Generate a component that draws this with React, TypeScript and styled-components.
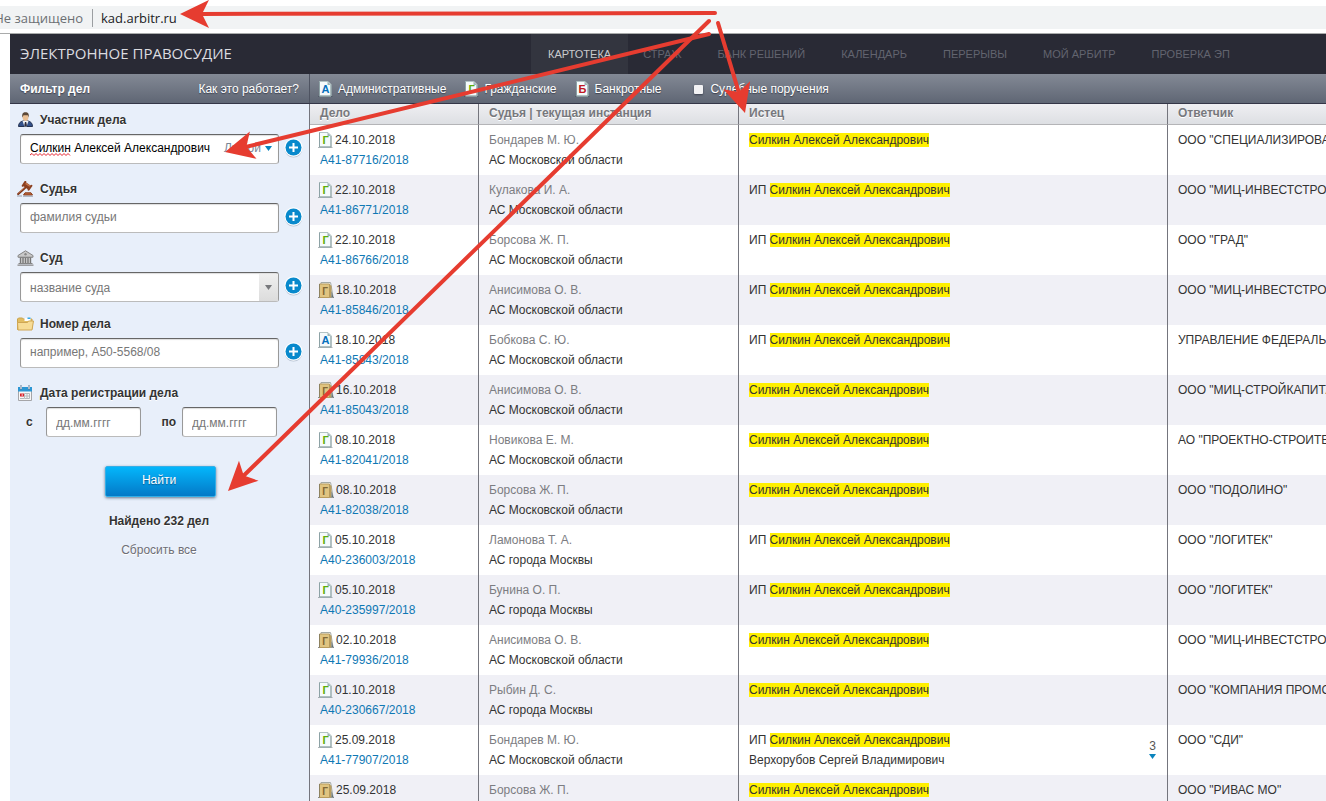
import React from 'react';
import styled, { createGlobalStyle, css } from 'styled-components';

const GlobalStyle = createGlobalStyle`
  *, *::before, *::after { box-sizing: border-box; }
  body {
    margin: 0;
    background: #fff;
    color: #333;
    font: 12px/20px "Liberation Sans", Arial, sans-serif;
  }
  button, input, select { font: inherit; }
`;

const Page = styled.div`
  position: relative;
  display: flex;
  flex-direction: column;
  height: 100vh;
  overflow: hidden;
`;

/* ---------- browser address bar ---------- */

const AddressBar = styled.div`
  display: flex;
  align-items: center;
  flex: none;
  height: 34px;
  padding: 6px 0 4px;
  border-bottom: 1px solid #a9abab;
  background: #f1f3f4 content-box;
  font: 13px/18px "Open Sans", "Noto Sans", sans-serif;
`;

const Security = styled.span`
  display: flex;
  justify-content: flex-end;
  width: 83px;
  overflow: hidden;
  white-space: nowrap;
  color: #6b6f73;
`;

const Url = styled.span`
  margin-left: 9px;
  padding-left: 8px;
  border-left: 1px solid #9b9ea1;
  color: #202124;
`;

/* ---------- header ---------- */

const Site = styled.div`
  display: flex;
  flex-direction: column;
  flex: 1;
  min-height: 0;
  margin-left: 10px;
`;

const Header = styled.header`
  display: flex;
  flex: none;
  height: 40px;
  background: #292a35;
`;

const Brand = styled.h1`
  flex: 0 0 521px;
  margin: 0;
  padding-left: 10px;
  color: #dcdce0;
  font: 400 15px/39px "Open Sans", "Noto Sans", sans-serif;
`;

const Nav = styled.nav`
  display: flex;
`;

const NavLink = styled.a<{ $active?: boolean }>`
  padding: ${p => (p.$active ? '0 17px' : '0 21px 0 15px')};
  color: ${p => (p.$active ? '#c9cacd' : '#62646f')};
  background: ${p => (p.$active ? '#33353f' : 'transparent')};
  font-size: 11px;
  line-height: 41px;
  text-decoration: none;
  white-space: nowrap;
`;

/* ---------- toolbar ---------- */

const Toolbar = styled.div`
  display: flex;
  flex: none;
  height: 30px;
  border-bottom: 1px solid #343647;
  background: linear-gradient(#838995, #5f6674);
  color: #fff;
  line-height: 30px;
  text-shadow: 0 1px 1px #3d4250;
`;

const ToolbarSide = styled.div`
  display: flex;
  justify-content: space-between;
  flex: 0 0 300px;
  padding: 0 10px;
  border-right: 1px solid #4e5361;
`;

const SideTitle = styled.h2`
  margin: 0;
  font-size: 12px;
`;

const HelpLink = styled.a`
  color: #fff;
  text-decoration: none;
`;

const ToolbarTypes = styled.div`
  display: flex;
  align-items: center;
  gap: 18px;
  padding: 1px 0 0 8px;
`;

const TypeButton = styled.button`
  display: flex;
  align-items: center;
  gap: 5px;
  padding: 0;
  border: 0;
  background: none;
  color: inherit;
  text-shadow: inherit;
  cursor: pointer;
`;

const OrdersLabel = styled.label`
  display: flex;
  align-items: center;
  gap: 7px;
  margin-left: 15px;
`;

const SmallCheckbox = styled.input`
  appearance: none;
  width: 9px;
  height: 9px;
  margin: 0;
  border-radius: 1px;
  background: #f2f2f4;
  box-shadow: 0 1px 2px #3d4250;
`;

/* ---------- filter sidebar ---------- */

const Main = styled.main`
  display: flex;
  flex: 1;
  min-height: 0;
`;

const Sidebar = styled.form`
  flex: 0 0 300px;
  border-right: 1px solid #74757d;
  background: #e8effa;
  text-shadow: 0 1px 0 #fff;
`;

const Field = styled.div<{ $tight?: boolean }>`
  margin-bottom: ${p => (p.$tight ? 6 : 9)}px;
`;

const FieldHead = styled.div`
  display: flex;
  align-items: center;
  gap: 6px;
  height: 30px;
  padding: 2px 0 0 7px;
`;

const FieldLabel = styled.label`
  color: #333;
  font-weight: 700;
`;

const FieldRow = styled.div`
  display: flex;
  align-items: flex-start;
  gap: 5px;
  padding-left: 10px;
`;

const ControlWrap = styled.div`
  position: relative;
  flex: 0 0 259px;
`;

const control = css`
  display: block;
  width: 100%;
  height: 30px;
  border: 1px solid #999;
  border-top-color: #666;
  border-bottom-color: #bbb;
  border-radius: 3px;
  background: #fff;
  box-shadow: inset 0 1px 1px #ddd;
  color: #000;
`;

const TextInput = styled.input`
  ${control}
  padding: 0 9px 2px;
  &::placeholder { color: #777; opacity: 1; }
`;

const CourtSelect = styled.select`
  ${control}
  appearance: none;
  padding: 2px 26px 0 9px;
  color: #777;
`;

const SelectArrow = styled.span`
  position: absolute;
  top: 2px;
  right: 1px;
  bottom: 1px;
  display: flex;
  align-items: center;
  justify-content: center;
  width: 19px;
  background: linear-gradient(#efefef, #dcdcdc);
  pointer-events: none;
`;

const RoleButton = styled.button`
  position: absolute;
  top: 4px;
  right: 7px;
  display: flex;
  align-items: center;
  gap: 4px;
  padding: 0;
  border: 0;
  background: none;
  color: #7b8797;
`;

const SpellMark = styled.svg`
  position: absolute;
  left: 10px;
  top: 19px;
`;

const AddButton = styled.button`
  width: 19px;
  height: 20px;
  margin-top: 4px;
  padding: 0;
  border: 0;
  background: none;
  svg { display: block; }
`;

const DateRow = styled.div`
  display: flex;
  align-items: center;
  justify-content: space-between;
  padding: 0 32px 0 16px;
`;

const DateLabel = styled.label`
  display: flex;
  align-items: center;
  gap: 6px;
  font-weight: 700;
`;

const DateInput = styled.input`
  ${control}
  width: 95px;
  padding: 2px 9px 0;
  font-weight: 400;
  &::placeholder { color: #777; opacity: 1; }
`;

const FromText = styled.span`
  width: 14px;
`;

const Summary = styled.div`
  display: flex;
  flex-direction: column;
  align-items: center;
  padding: 20px 1px 0 0;
`;

const FindButton = styled.button`
  width: 111px;
  height: 31px;
  margin-left: 2px;
  padding: 0 2px 3px 0;
  border: 1px solid #35aee6;
  border-radius: 2px;
  background: linear-gradient(#04b6fb, #0479c7);
  box-shadow: 0 1px 3px #66788f;
  color: #fff;
  text-shadow: 0 1px 1px #0a5d94;
`;

const FoundCount = styled.p`
  margin: 14px 0 9px;
  font-weight: 700;
`;

const ResetButton = styled.button`
  padding: 0;
  border: 0;
  background: none;
  color: #6d6e76;
  line-height: 20px;
  text-shadow: inherit;
`;

/* ---------- results ---------- */

const Results = styled.section`
  flex: 1;
  min-width: 0;
  overflow: hidden;
`;

const Table = styled.table`
  width: 100%;
  border-spacing: 0;
  table-layout: fixed;
`;

const Th = styled.th<{ $width?: number }>`
  width: ${p => (p.$width ? `${p.$width}px` : 'auto')};
  height: 21px;
  padding: 0 10px 2px;
  border-bottom: 1px solid #b4b4b7;
  border-right: 1px solid #74757d;
  background: linear-gradient(#efeff2, #dddfe3);
  color: #77787d;
  line-height: 18px;
  text-align: left;
  text-shadow: 0 1px 0 #fff;
  white-space: nowrap;
  &:last-child { border-right: 0; }
`;

const Tr = styled.tr`
  height: 50px;
  &:nth-child(even) { background: #f0f0f6; }
`;

const Td = styled.td`
  position: relative;
  padding: 5px 10px;
  border-right: 1px solid #74757d;
  vertical-align: top;
  overflow: hidden;
  white-space: nowrap;
  &:last-child { border-right: 0; }
`;

const CaseTd = styled(Td)`
  padding-left: 8px;
`;

const CaseDate = styled.div`
  display: flex;
  align-items: center;
  gap: 2px;
`;

const CaseLink = styled.a`
  margin-left: 2px;
  color: #0f78b4;
  text-decoration: none;
`;

const Judge = styled.div`
  color: #7c7d82;
`;

const Match = styled.mark`
  background: #fff000;
  color: #333;
`;

const MoreButton = styled.button`
  position: absolute;
  top: 11px;
  right: 11px;
  display: flex;
  flex-direction: column;
  align-items: center;
  padding: 0;
  border: 0;
  background: none;
  color: #555;
  svg { margin-top: -2px; }
`;

const Arrows = styled.svg`
  position: absolute;
  top: 0;
  left: 0;
  pointer-events: none;
`;

/* ---------- icons ---------- */

type Kind = 'А' | 'Г' | 'Б';
const letterColor: Record<Kind, string> = { А: '#0670bd', Г: '#5fae08', Б: '#c01722' };

const DocIcon = ({ kind }: { kind: Kind }) => (
  <svg width="15" height="17" viewBox="0 0 15 17" aria-hidden="true">
    <path d="M0 15.500h14.500" stroke="#35404a" strokeOpacity=".4" />
    <path d="M1.500.5h8.500l3 3v11.500h-11.500z" fill="#f5fafb" stroke="#b3c3c4" />
    <path d="M1.500.5v14.500h11.500v-11" fill="none" stroke="#8da2a5" />
    <path d="M9.500.5v3.500h3.500z" fill="#9fb5b5" />
    <text x="7.500" y="12" textAnchor="middle" fontSize="11" fontWeight="700" fill={letterColor[kind]} style={{ textShadow: 'none' }}>{kind}</text>
  </svg>
);

const FolderDocIcon = () => (
  <svg width="16" height="17" viewBox="0 0 16 17" aria-hidden="true">
    <path d="M0 15.500h16" stroke="#35404a" strokeOpacity=".6" />
    <path d="M3 .5h9.500l.5 2 2 12.500h-13z" fill="#eef1f1" stroke="#a2a9a6" />
    <path d="M1.500 2h10v13.500h-10z" fill="#e0c480" stroke="#b89b5c" />
    <path d="M1.500 2v13.500" stroke="#8d815f" />
    <path d="M12 2.500l1.500 1.500v11.500h-1.500z" fill="#b99e60" />
    <path d="M13.500 9l1.800 6h-1.800z" fill="#60717a" />
    <text x="7" y="13" textAnchor="middle" fontSize="10" fontWeight="700" fill="#806733">Г</text>
  </svg>
);

const PersonIcon = () => (
  <svg width="17" height="16" viewBox="0 0 17 16" aria-hidden="true">
    <path d="M1.500 14.500c0-3.500 2-5 4.500-5.500h5c2.500.5 4.500 2 4.500 5.500z" fill="#34518a" stroke="#263452" />
    <path d="M5.500 9h6L9.500 14.500h-2z" fill="#eef3f8" />
    <path d="M8 10h1.200l.8 3.500-1.400 1-1.400-1z" fill="#2d2c3d" />
    <ellipse cx="8.500" cy="5.200" rx="2.900" ry="3.700" fill="#eabf94" />
    <path d="M5.400 5.500C4.800 2.200 5.500.3 8.300.2c3 0 4 1.600 3.300 5.300L10.800 3.300H6.500z" fill="#5c4837" />
  </svg>
);

const GavelIcon = () => (
  <svg width="17" height="16" viewBox="0 0 17 16" aria-hidden="true">
    <path d="M8.500 6.500L1.200 13" stroke="#7b3418" strokeWidth="2.200" strokeLinecap="round" />
    <path d="M8.300 6L1.400 12.300" stroke="#c9774a" strokeWidth=".8" />
    <path d="M7.200 2.800l5.300 3.800" stroke="#8c4020" strokeWidth="4.600" />
    <path d="M7.900 1.800l5.300 3.600" stroke="#c4744a" strokeWidth="1.600" />
    <path d="M5.700 4.800L8.300.9M11.600 8.800l2.800-4" stroke="#8c4020" strokeWidth="2" strokeLinecap="round" />
    <path d="M8 11.800h6l1.500 2.200h-9z" fill="#bd6539" stroke="#8c4020" />
    <path d="M0 15h5M6 15.200h10" stroke="#99a1ae" />
  </svg>
);

const CourtIcon = () => (
  <svg width="17" height="16" viewBox="0 0 17 16" aria-hidden="true">
    <path d="M1 5.500L8.500.8 16 5.500v1.700H1z" fill="#c9c9c9" stroke="#858585" />
    <circle cx="8.500" cy="4.300" r="1.200" fill="#888" />
    <path d="M3 7.500h11v6H3z" fill="#d5d5d5" />
    <path d="M3.500 8v5M6 8v5M8.500 8v5M11 8v5M13.500 8v5" stroke="#777" strokeWidth="1.400" />
    <path d="M2.500 7.500h12M1.500 13.500h14M.5 15.200h16" stroke="#858585" strokeWidth="1.200" />
  </svg>
);

const FolderIcon = () => (
  <svg width="17" height="16" viewBox="0 0 17 16" aria-hidden="true">
    <path d="M.5 13.500V3l1-1h4l1 1h8.500v10z" fill="#e2bd62" stroke="#c9a34c" />
    <path d="M7.500 2h6v3h-6z" fill="#fff" />
    <path d="M10.500 1.500h3v1.500h-3z" fill="#35a9e8" />
    <path d="M.5 6.500h10l1-1.500h5l-1.500 9h-14z" fill="#f7dc96" stroke="#cfa654" />
  </svg>
);

const CalendarIcon = () => (
  <svg width="17" height="16" viewBox="0 0 17 16" aria-hidden="true">
    <path d="M1.500 3.500h13v12h-13z" fill="#f7f7f7" stroke="#a5a5a8" />
    <path d="M1 2h14v4.500H1z" fill="#2c96d3" />
    <path d="M4 .5v4M12 .5v4" stroke="#5e7992" strokeWidth="2" />
    <path d="M4 1v3M12 1v3" stroke="#fff" />
    <path d="M3 8.500h4v3H3z" fill="#d6212a" />
    <path d="M4.500 10h1.500" stroke="#fff" />
    <path d="M7.500 8.500h5v5h-5zM7.500 11h5M10 8.500v5M3 13.500h4" fill="none" stroke="#b5b9bd" />
  </svg>
);

const PlusIcon = () => (
  <svg width="19" height="20" viewBox="0 0 19 20" aria-hidden="true">
    <circle cx="9.500" cy="10.600" r="8.900" fill="#b7c3d3" />
    <circle cx="9.500" cy="9.500" r="9.200" fill="#fff" />
    <circle cx="9.500" cy="9.500" r="8" fill="#0889cc" />
    <path d="M9.500 5v9M5 9.500h9" stroke="#fff" strokeWidth="2" />
  </svg>
);

const Caret = ({ color = '#0a84bd' }: { color?: string }) => (
  <svg width="7" height="5" viewBox="0 0 7 5" aria-hidden="true">
    <path d="M0 0h7L3.500 5z" fill={color} />
  </svg>
);

/* ---------- annotation arrows ---------- */

const arrowLines = [
  { from: [715, 13], to: [180, 14] },
  { from: [709, 34], to: [225, 152] },
  { from: [709, 21], to: [228, 491] },
  { from: [718, 23], to: [745, 113] },
];

const AnnotationArrow = ({ from, to }: { from: number[]; to: number[] }) => {
  const dx = to[0] - from[0];
  const dy = to[1] - from[1];
  const length = Math.hypot(dx, dy);
  const angle = (Math.atan2(dy, dx) * 180) / Math.PI;
  return (
    <g transform={`translate(${from[0]} ${from[1]}) rotate(${angle})`}>
      <path d={`M0 0H${length - 20}`} stroke="#e63c30" strokeWidth="4" strokeLinecap="round" />
      <path d={`M${length} 0l-29-14 7 14-7 14z`} fill="#e63c30" />
    </g>
  );
};

/* ---------- data ---------- */

const nav = ['КАРТОТЕКА', 'СТРАЖ', 'БАНК РЕШЕНИЙ', 'КАЛЕНДАРЬ', 'ПЕРЕРЫВЫ', 'МОЙ АРБИТР', 'ПРОВЕРКА ЭП'];

const types: { kind: Kind; label: string }[] = [
  { kind: 'А', label: 'Административные' },
  { kind: 'Г', label: 'Гражданские' },
  { kind: 'Б', label: 'Банкротные' },
];

const PLAINTIFF = 'Силкин Алексей Александрович';
const MO = 'АС Московской области';
const MSK = 'АС города Москвы';

interface CaseRow {
  date: string;
  num: string;
  icon: 'А' | 'Г' | 'folder';
  judge: string;
  court: string;
  ip?: boolean;
  respondent: string;
  extra?: string;
  count?: number;
}

const cases: CaseRow[] = [
  { date: '24.10.2018', num: 'А41-87716/2018', icon: 'Г', judge: 'Бондарев М. Ю.', court: MO, respondent: 'ООО "СПЕЦИАЛИЗИРОВАННЫЙ' },
  { date: '22.10.2018', num: 'А41-86771/2018', icon: 'Г', judge: 'Кулакова И. А.', court: MO, ip: true, respondent: 'ООО "МИЦ-ИНВЕСТСТРОЙ"' },
  { date: '22.10.2018', num: 'А41-86766/2018', icon: 'Г', judge: 'Борсова Ж. П.', court: MO, ip: true, respondent: 'ООО "ГРАД"' },
  { date: '18.10.2018', num: 'А41-85846/2018', icon: 'folder', judge: 'Анисимова О. В.', court: MO, ip: true, respondent: 'ООО "МИЦ-ИНВЕСТСТРОЙ"' },
  { date: '18.10.2018', num: 'А41-85843/2018', icon: 'А', judge: 'Бобкова С. Ю.', court: MO, ip: true, respondent: 'УПРАВЛЕНИЕ ФЕДЕРАЛЬНОЙ' },
  { date: '16.10.2018', num: 'А41-85043/2018', icon: 'folder', judge: 'Анисимова О. В.', court: MO, respondent: 'ООО "МИЦ-СТРОЙКАПИТАЛ"' },
  { date: '08.10.2018', num: 'А41-82041/2018', icon: 'Г', judge: 'Новикова Е. М.', court: MO, respondent: 'АО "ПРОЕКТНО-СТРОИТЕЛЬНОЕ' },
  { date: '08.10.2018', num: 'А41-82038/2018', icon: 'folder', judge: 'Борсова Ж. П.', court: MO, respondent: 'ООО "ПОДОЛИНО"' },
  { date: '05.10.2018', num: 'А40-236003/2018', icon: 'Г', judge: 'Ламонова Т. А.', court: MSK, ip: true, respondent: 'ООО "ЛОГИТЕК"' },
  { date: '05.10.2018', num: 'А40-235997/2018', icon: 'Г', judge: 'Бунина О. П.', court: MSK, ip: true, respondent: 'ООО "ЛОГИТЕК"' },
  { date: '02.10.2018', num: 'А41-79936/2018', icon: 'folder', judge: 'Анисимова О. В.', court: MO, respondent: 'ООО "МИЦ-ИНВЕСТСТРОЙ"' },
  { date: '01.10.2018', num: 'А40-230667/2018', icon: 'Г', judge: 'Рыбин Д. С.', court: MSK, respondent: 'ООО "КОМПАНИЯ ПРОМСТРОЙ"' },
  { date: '25.09.2018', num: 'А41-77907/2018', icon: 'Г', judge: 'Бондарев М. Ю.', court: MO, ip: true, respondent: 'ООО "СДИ"', extra: 'Верхорубов Сергей Владимирович', count: 3 },
  { date: '25.09.2018', num: '', icon: 'folder', judge: 'Борсова Ж. П.', court: '', respondent: 'ООО "РИВАС МО"' },
];

export default function App() {
  return (
    <Page>
      <GlobalStyle />
      <AddressBar>
        <Security>Не защищено</Security>
        <Url>kad.arbitr.ru</Url>
      </AddressBar>

      <Site>
        <Header>
          <Brand>ЭЛЕКТРОННОЕ ПРАВОСУДИЕ</Brand>
          <Nav>
            {nav.map((label, i) => (
              <NavLink key={label} href="#" $active={i === 0}>{label}</NavLink>
            ))}
          </Nav>
        </Header>

        <Toolbar>
          <ToolbarSide>
            <SideTitle>Фильтр дел</SideTitle>
            <HelpLink href="#">Как это работает?</HelpLink>
          </ToolbarSide>
          <ToolbarTypes>
            {types.map(t => (
              <TypeButton key={t.kind} type="button">
                <DocIcon kind={t.kind} />
                {t.label}
              </TypeButton>
            ))}
            <OrdersLabel>
              <SmallCheckbox type="checkbox" />
              Судебные поручения
            </OrdersLabel>
          </ToolbarTypes>
        </Toolbar>

        <Main>
          <Sidebar onSubmit={e => e.preventDefault()}>
            <Field>
              <FieldHead>
                <PersonIcon />
                <FieldLabel htmlFor="party">Участник дела</FieldLabel>
              </FieldHead>
              <FieldRow>
                <ControlWrap>
                  <TextInput id="party" defaultValue={PLAINTIFF} spellCheck={false} />
                  <SpellMark width="41" height="3" viewBox="0 0 41 3" aria-hidden="true">
                    <path d="M0 2l2-1.500 2 2 2-2 2 2 2-2 2 2 2-2 2 2 2-2 2 2 2-2 2 2 2-2 2 2 2-2 2 2 2-2 2 2 2-2 2 2" fill="none" stroke="#e3202c" />
                  </SpellMark>
                  <RoleButton type="button">Любой<Caret /></RoleButton>
                </ControlWrap>
                <AddButton type="button" aria-label="Добавить участника"><PlusIcon /></AddButton>
              </FieldRow>
            </Field>

            <Field>
              <FieldHead>
                <GavelIcon />
                <FieldLabel htmlFor="judge">Судья</FieldLabel>
              </FieldHead>
              <FieldRow>
                <ControlWrap><TextInput id="judge" placeholder="фамилия судьи" /></ControlWrap>
                <AddButton type="button" aria-label="Добавить судью"><PlusIcon /></AddButton>
              </FieldRow>
            </Field>

            <Field $tight>
              <FieldHead>
                <CourtIcon />
                <FieldLabel htmlFor="court">Суд</FieldLabel>
              </FieldHead>
              <FieldRow>
                <ControlWrap>
                  <CourtSelect id="court"><option>название суда</option></CourtSelect>
                  <SelectArrow><Caret color="#77787c" /></SelectArrow>
                </ControlWrap>
                <AddButton type="button" aria-label="Добавить суд"><PlusIcon /></AddButton>
              </FieldRow>
            </Field>

            <Field>
              <FieldHead>
                <FolderIcon />
                <FieldLabel htmlFor="number">Номер дела</FieldLabel>
              </FieldHead>
              <FieldRow>
                <ControlWrap><TextInput id="number" placeholder="например, А50-5568/08" /></ControlWrap>
                <AddButton type="button" aria-label="Добавить номер"><PlusIcon /></AddButton>
              </FieldRow>
            </Field>

            <Field>
              <FieldHead>
                <CalendarIcon />
                <FieldLabel htmlFor="from">Дата регистрации дела</FieldLabel>
              </FieldHead>
              <DateRow>
                <DateLabel><FromText>с</FromText><DateInput id="from" placeholder="дд.мм.гггг" /></DateLabel>
                <DateLabel>по<DateInput placeholder="дд.мм.гггг" /></DateLabel>
              </DateRow>
            </Field>

            <Summary>
              <FindButton type="submit">Найти</FindButton>
              <FoundCount>Найдено 232 дел</FoundCount>
              <ResetButton type="reset">Сбросить все</ResetButton>
            </Summary>
          </Sidebar>

          <Results>
            <Table>
              <thead>
                <tr>
                  <Th $width={169}>Дело</Th>
                  <Th $width={260}>Судья | текущая инстанция</Th>
                  <Th $width={429}>Истец</Th>
                  <Th>Ответчик</Th>
                </tr>
              </thead>
              <tbody>
                {cases.map((c, i) => (
                  <Tr key={i}>
                    <CaseTd>
                      <CaseDate>
                        {c.icon === 'folder' ? <FolderDocIcon /> : <DocIcon kind={c.icon} />}
                        {c.date}
                      </CaseDate>
                      {c.num && <CaseLink href="#">{c.num}</CaseLink>}
                    </CaseTd>
                    <Td>
                      <Judge>{c.judge}</Judge>
                      {c.court}
                    </Td>
                    <Td>
                      {c.ip && 'ИП '}
                      <Match>{PLAINTIFF}</Match>
                      {c.extra && <div>{c.extra}</div>}
                      {c.count && <MoreButton type="button">{c.count}<Caret /></MoreButton>}
                    </Td>
                    <Td>{c.respondent}</Td>
                  </Tr>
                ))}
              </tbody>
            </Table>
          </Results>
        </Main>
      </Site>

      <Arrows width="800" height="520" viewBox="0 0 800 520" aria-hidden="true">
        {arrowLines.map((a, i) => <AnnotationArrow key={i} from={a.from} to={a.to} />)}
      </Arrows>
    </Page>
  );
}
